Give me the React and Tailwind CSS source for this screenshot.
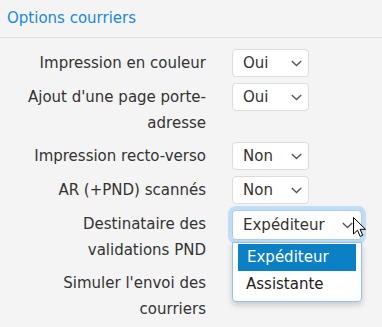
import React from 'react';

const rows = [
  { label: "Impression en couleur", value: 'Oui' },
  { label: "Ajout d'une page porte-adresse", value: 'Oui' },
  { label: 'Impression recto-verso', value: 'Non' },
  { label: 'AR (+PND) scannés', value: 'Non' },
];

const Chevron = () => (
  <svg width="11" height="7" viewBox="0 0 11 7" className="shrink-0">
    <path d="M0.8 1l4.7 4.5L10.2 1" fill="none" stroke="#555" strokeWidth="1.4" />
  </svg>
);

const Select = ({ value }) => (
  <div className="flex h-[28px] w-[77px] items-center justify-between rounded-[4px] border border-[#dcdcdc] bg-white pl-[10px] pr-[6px]">
    <span>{value}</span>
    <Chevron />
  </div>
);

const Cursor = () => (
  <svg width="13" height="21" viewBox="0 0 13 21" className="absolute left-[121px] top-[7px] z-20">
    <path
      d="M0.5 0.5v16.5l4-3.8 2.6 6.2 2.6-1.1-2.6-6h5.4z"
      fill="#fff"
      stroke="#000"
      strokeWidth="1"
      strokeLinejoin="round"
    />
  </svg>
);

const App = () => {
  return (
    <div className="h-[327px] w-[382px] overflow-hidden bg-[#f4f4f4] font-['DejaVu_Sans',sans-serif] text-[15px] text-[#333]">
      <div className="flex h-[38px] items-center border-b border-[#e2e2e2] px-[7px] pb-px text-[#1b8ad3]">
        Options courriers
      </div>

      <div className="flex flex-col gap-[6px] pt-[11px]">
        {rows.map((row) => (
          <div key={row.label} className="flex items-start gap-[26px]">
            <div className="ml-[20px] w-[186px] pt-px text-right leading-[26px]">{row.label}</div>
            <Select value={row.value} />
          </div>
        ))}

        {/* open dropdown */}
        <div className="flex items-start gap-[26px]">
          <div className="ml-[20px] w-[186px] pt-px text-right leading-[26px]">
            Destinataire des validations PND
          </div>
          <div className="relative">
            <div className="flex h-[30px] w-[130px] items-center justify-between rounded-[4px] border border-[#a9cdee] bg-white pl-[10px] pr-[8px] shadow-[0_0_1px_4px_#c0dcf6]">
              <span>Expéditeur</span>
              <Chevron />
            </div>
            <div className="absolute left-0 top-[32px] z-10 w-[130px] rounded-b-[4px] border border-[#92c2ec] bg-white px-[5px] pt-px pb-[3px] shadow-[0_3px_6px_rgba(0,0,0,0.18)]">
              <div className="flex h-[27px] items-center bg-[#0b80c5] pl-[9px] text-white">Expéditeur</div>
              <div className="flex h-[27px] items-center pl-[8px] text-[#222]">Assistante</div>
            </div>
            <Cursor />
          </div>
        </div>

        <div className="flex items-start gap-[26px]">
          <div className="ml-[20px] w-[186px] pt-px text-right leading-[26px]">
            Simuler l'envoi des courriers
          </div>
        </div>
      </div>
    </div>
  );
};

export default App;
